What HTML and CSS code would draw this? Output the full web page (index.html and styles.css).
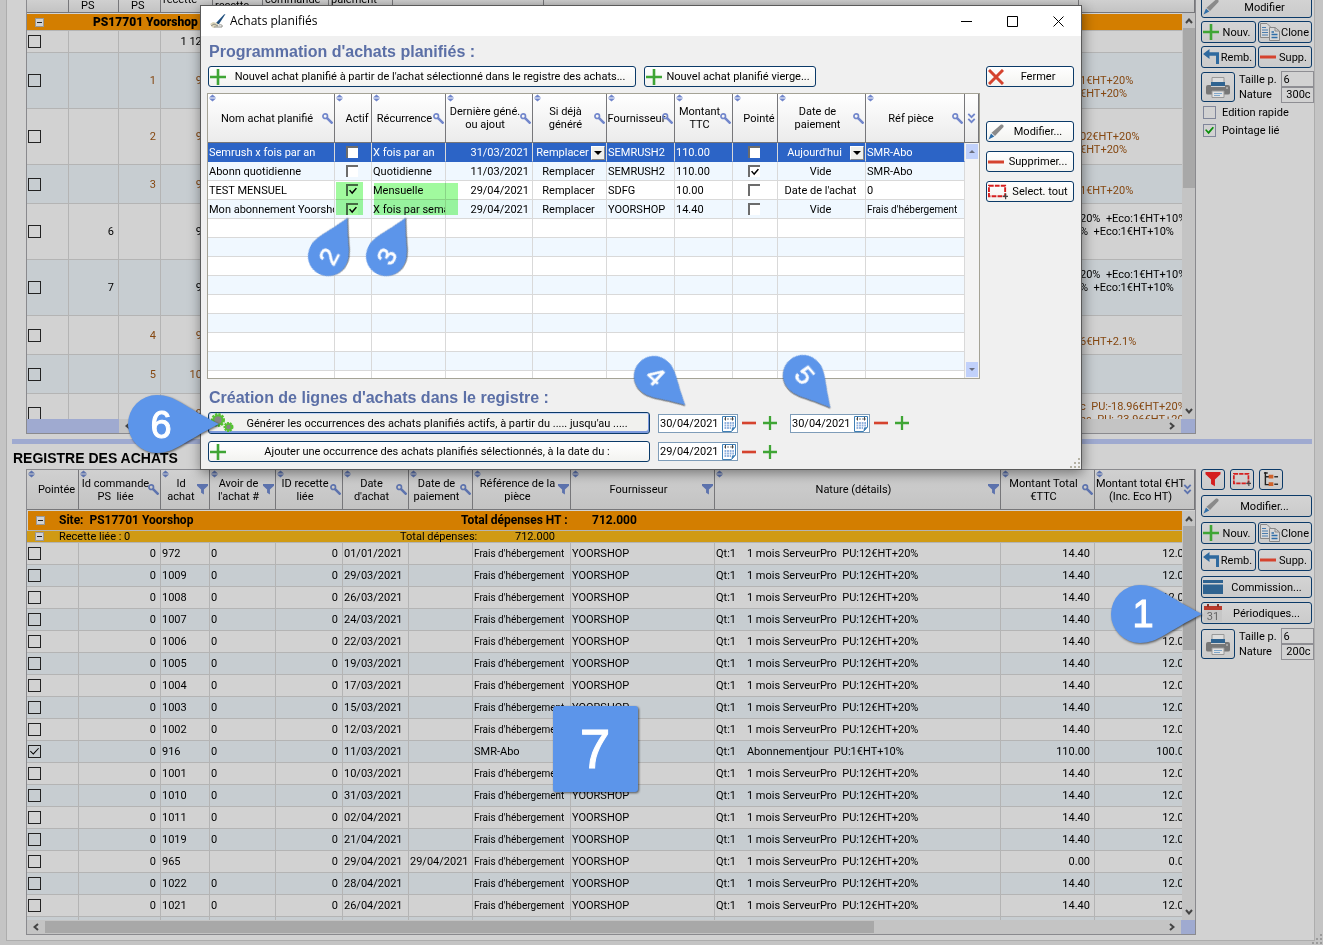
FILE: index.html
```html
<!DOCTYPE html>
<html lang="fr">
<head>
<meta charset="utf-8">
<title>Registre des achats</title>
<link rel="stylesheet" href="styles.css">
</head>
<body>
<svg class="defs" aria-hidden="true">
  <symbol id="sort" viewBox="0 0 8 8"><path d="M4 0L8 3.500H0zM4 8L0 4.500H8z"/></symbol>
  <symbol id="key" viewBox="0 0 12 12"><circle cx="3.500" cy="3.500" r="2.500" fill="none" stroke="currentColor" stroke-width="1.800"/><path d="M5 5L11.500 11.500" fill="none" stroke="currentColor" stroke-width="2.800"/></symbol>
  <symbol id="funnel" viewBox="0 0 10 10"><path d="M0 0H10V1.500L6.300 5V9.500L3.700 8V5L0 1.500z"/></symbol>
  <symbol id="more" viewBox="0 0 9 12"><path d="M1 1L4.500 4.500L8 1M1 6.500L4.500 10L8 6.500" fill="none" stroke="currentColor" stroke-width="2"/></symbol>
  <symbol id="plus" viewBox="0 0 16 16"><path d="M6.700 0H9.300V6.700H16V9.300H9.300V16H6.700V9.300H0V6.700H6.700z" fill="currentColor"/></symbol>
  <symbol id="minus" viewBox="0 0 16 16"><path d="M0 6.500H16V9.500H0z" fill="currentColor"/></symbol>
  <symbol id="cross" viewBox="0 0 16 16"><path d="M1 1L15 15M15 1L1 15" stroke="currentColor" stroke-width="3" fill="none"/></symbol>
  <symbol id="pencil" viewBox="0 0 16 16"><path d="M13 .5Q16 0 15.500 3L7 12L3.500 8.700z" fill="#8a8a8a"/><path d="M3 9.500L6.300 12.600L.5 15.500z" fill="#2f6ea8"/></symbol>
  <symbol id="clone" viewBox="0 0 20 18"><path d="M.5.5H7L10.500 4V14.500H.5z" fill="#d8d8d8" stroke="#888"/><path d="M2 4.500H6M2 7H8M2 9.500H8M2 12H8" stroke="#4a7cad"/><path d="M9.500 4.500H15L19.500 8V17.500H9.500z" fill="#d8d8d8" stroke="#888"/><path d="M15 4.500V8H19" fill="none" stroke="#888"/><path d="M11.500 9H14M11.500 11.500H17.500M11.500 14.500H17.500" stroke="#2f6ea8" stroke-width="1.400"/></symbol>
  <symbol id="back" viewBox="0 0 16 16"><path d="M0 5L6.500 0V3.300H16V15H13V6.800H6.500V10z" fill="#2f6a9f"/></symbol>
  <symbol id="printer" viewBox="0 0 24 22"><path d="M6 1.500H18V8H6z" fill="#ddd" stroke="#999"/><path d="M5 6H19V10H5z" fill="#2f6390"/><path d="M2 9H5V11H19V9H22Q24 9 24 11V17Q24 18.500 22 18.500H2Q0 18.500 0 17V11Q0 9 2 9z" fill="#777"/><path d="M6 15H18V21.500H6z" fill="#e2e2e2" stroke="#999"/><path d="M8 17.500H16M8 19.500H14" stroke="#7fa6c9"/><circle cx="21" cy="12" r=".8" fill="#ddd"/></symbol>
  <symbol id="marquee" viewBox="0 0 21 15"><path d="M1 1H18V12H1z" fill="none" stroke="#d51f1f" stroke-width="2" stroke-dasharray="5 1.200"/><path d="M18.500 9V15M15.500 12H21" stroke="#444" stroke-width="1.300"/></symbol>
  <symbol id="tree" viewBox="0 0 17 16"><path d="M2.500 0V13.500H8M2.500 5H8M1 1H5" fill="none" stroke="#222" stroke-width="1.500"/><path d="M6 3H11V7H6zM6 11H11V15H6z" fill="#d0622a"/><path d="M12 5H16M12 13H16" stroke="#333" stroke-width="1.500"/></symbol>
  <symbol id="card" viewBox="0 0 20 14"><path d="M0 0H20V3H0zM0 4.500H20V14H0z" fill="#2f6390"/></symbol>
  <symbol id="calendar" viewBox="0 0 18 18"><path d="M0 3H18V18H0z" fill="#c6c6c6"/><path d="M0 2H18V6H0z" fill="#b83a2c"/><path d="M4 0V3M14 0V3" stroke="#8c3128" stroke-width="2"/><text x="9" y="16" font-size="11" text-anchor="middle" fill="#666">31</text></symbol>
  <symbol id="datepick" viewBox="0 0 14 17"><path d="M.5 1.500H13.500V12L9.500 16.500H.5z" fill="#fff" stroke="#3f7fb5"/><path d="M2 4H12" stroke="#777" stroke-dasharray="2 1"/><path d="M3.500 2V5.500M10.500 2V5.500" stroke="#444"/><path d="M2.500 8H12M2.500 10.500H12M2.500 13H9" stroke="#8fb0dd" stroke-width="1.800" stroke-dasharray="1.800 .8"/><path d="M9.500 16.500L10 12.500L13.500 12z" fill="#3f7fb5"/></symbol>
  <symbol id="gears" viewBox="0 0 24 20"><circle cx="8" cy="7" r="5.500" fill="#858585" stroke="#55c331" stroke-width="3" stroke-dasharray="2.200 1"/><circle cx="8" cy="7" r="4.500" fill="none" stroke="#55c331" stroke-width="1.600"/><circle cx="18.500" cy="14" r="3.700" fill="#858585" stroke="#55c331" stroke-width="2.600" stroke-dasharray="1.800 .8"/><circle cx="18.500" cy="14" r="3" fill="none" stroke="#55c331" stroke-width="1.400"/></symbol>
  <symbol id="quill" viewBox="0 0 16 16"><path d="M15.500 1L14 1.500L6 10L7 11.500L9 11z" fill="#1d4d7c"/><path d="M0 11L3 9L7 10L9 13L3 15z" fill="#ddd6ba"/><path d="M1 13L4 11L8 13M9 12Q13 11 12 14H4" fill="none" stroke="#8d8d86"/></symbol>
  <symbol id="up" viewBox="0 0 8 6"><path d="M1 5L4 1.500L7 5" fill="none" stroke="#444" stroke-width="2"/></symbol>
  <symbol id="down" viewBox="0 0 8 6"><path d="M1 1L4 4.500L7 1" fill="none" stroke="#444" stroke-width="2"/></symbol>
  <symbol id="left" viewBox="0 0 6 8"><path d="M5 1L1.500 4L5 7" fill="none" stroke="#444" stroke-width="2"/></symbol>
  <symbol id="right" viewBox="0 0 6 8"><path d="M1 1L4.500 4L1 7" fill="none" stroke="#444" stroke-width="2"/></symbol>
  <symbol id="caret" viewBox="0 0 8 4"><path d="M0 0H8L4 4z"/></symbol>
</svg>

<main class="app">
  <section class="pane pane-top">
    <div class="grid-frame">
      <div class="viewport">
        <table class="grid grid-sales" id="sales"></table>
      </div>
      <div class="vbar vbar-sales"><svg><use href="#up"/></svg><i></i><svg><use href="#down"/></svg></div>
      <div class="hbar hbar-sales"><b></b><svg><use href="#left"/></svg><i></i><svg><use href="#right"/></svg><b class="corner"></b></div>
    </div>
    <aside class="tools">
      <button class="btn"><svg class="i16"><use href="#pencil"/></svg><span>Modifier</span></button>
      <div class="pair">
        <button class="btn"><svg class="i16 green"><use href="#plus"/></svg><span>Nouv.</span></button>
        <button class="btn"><svg class="i20"><use href="#clone"/></svg><span>Clone</span></button>
        <button class="btn"><svg class="i16"><use href="#back"/></svg><span>Remb.</span></button>
        <button class="btn"><svg class="i16 red"><use href="#minus"/></svg><span>Supp.</span></button>
      </div>
      <div class="print">
        <button class="btn btn-print" aria-label="Imprimer"><svg><use href="#printer"/></svg></button>
        <label for="t1">Taille p.</label><input id="t1" value="6">
        <label for="n1">Nature</label><input id="n1" class="num" value="300c">
      </div>
      <label class="tick"><input type="checkbox">Edition rapide</label>
      <label class="tick"><input type="checkbox" checked>Pointage lié</label>
    </aside>
  </section>

  <div class="splitter"></div>
  <h1 class="title">REGISTRE DES ACHATS</h1>

  <section class="pane pane-bottom">
    <div class="grid-frame">
      <div class="viewport">
        <table class="grid grid-buys" id="buys"></table>
      </div>
      <div class="vbar vbar-buys"><svg><use href="#up"/></svg><i></i><svg><use href="#down"/></svg></div>
      <div class="hbar hbar-buys"><svg><use href="#left"/></svg><i></i><svg><use href="#right"/></svg><b class="corner"></b></div>
    </div>
    <aside class="tools tools-buys">
      <div class="icons">
        <button class="btn" aria-label="Filtrer"><svg class="i16 pure-red"><use href="#funnel"/></svg></button>
        <button class="btn" aria-label="Sélectionner tout"><svg class="i20"><use href="#marquee"/></svg></button>
        <button class="btn" aria-label="Arborescence"><svg class="i16"><use href="#tree"/></svg></button>
      </div>
      <button class="btn"><svg class="i16"><use href="#pencil"/></svg><span>Modifier...</span></button>
      <div class="pair">
        <button class="btn"><svg class="i16 green"><use href="#plus"/></svg><span>Nouv.</span></button>
        <button class="btn"><svg class="i20"><use href="#clone"/></svg><span>Clone</span></button>
        <button class="btn"><svg class="i16"><use href="#back"/></svg><span>Remb.</span></button>
        <button class="btn"><svg class="i16 red"><use href="#minus"/></svg><span>Supp.</span></button>
      </div>
      <button class="btn"><svg class="i20"><use href="#card"/></svg><span>Commission...</span></button>
      <button class="btn"><svg class="i20"><use href="#calendar"/></svg><span>Périodiques...</span></button>
      <div class="print">
        <button class="btn btn-print" aria-label="Imprimer"><svg><use href="#printer"/></svg></button>
        <label for="t2">Taille p.</label><input id="t2" value="6">
        <label for="n2">Nature</label><input id="n2" class="num" value="200c">
      </div>
    </aside>
  </section>
</main>

<div class="window" role="dialog" aria-labelledby="wt">
  <header class="titlebar">
    <svg class="i16"><use href="#quill"/></svg>
    <span id="wt" class="wtitle">Achats planifiés</span>
    <button aria-label="Réduire"><svg viewBox="0 0 11 11"><path d="M0 5.500H11"/></svg></button>
    <button aria-label="Agrandir"><svg viewBox="0 0 11 11"><path d="M.5.5H10.500V10.500H.5z"/></svg></button>
    <button aria-label="Fermer"><svg viewBox="0 0 11 11"><path d="M.5.5L10.500 10.500M10.500.5L.5 10.500"/></svg></button>
  </header>
  <div class="wbody">
    <h2>Programmation d'achats planifiés :</h2>
    <div class="planner">
      <div class="plan-main">
        <div class="row">
          <button class="btn btn-wide"><svg class="i16 green"><use href="#plus"/></svg><span>Nouvel achat planifié à partir de l'achat sélectionné dans le registre des achats...</span></button>
          <button class="btn btn-blank"><svg class="i16 green"><use href="#plus"/></svg><span>Nouvel achat planifié vierge...</span></button>
        </div>
        <div class="plan-frame">
          <div class="viewport"><table class="grid grid-plan" id="plan"></table></div>
          <div class="vbar vbar-plan"><svg><use href="#caret"/></svg><i></i><svg><use href="#caret"/></svg></div>
          <div class="mark mark-a"></div>
          <div class="mark mark-b"></div>
        </div>
      </div>
      <div class="plan-side">
        <button class="btn btn-close"><svg class="i16 red"><use href="#cross"/></svg><span>Fermer</span></button>
        <button class="btn"><svg class="i16"><use href="#pencil"/></svg><span>Modifier...</span></button>
        <button class="btn"><svg class="i16 red"><use href="#minus"/></svg><span>Supprimer...</span></button>
        <button class="btn"><svg class="i20"><use href="#marquee"/></svg><span>Select. tout</span></button>
      </div>
    </div>
    <h2>Création de lignes d'achats dans le registre :</h2>
    <div class="row create">
      <button class="btn btn-create focus"><svg class="i24"><use href="#gears"/></svg><span>Générer les occurrences des achats planifiés actifs, à partir du ..... jusqu'au .....</span></button>
      <div class="date"><input aria-label="Date de début" value="30/04/2021"><button aria-label="Calendrier"><svg><use href="#datepick"/></svg></button></div>
      <button class="step red" aria-label="Jour précédent"><svg><use href="#minus"/></svg></button>
      <button class="step green" aria-label="Jour suivant"><svg><use href="#plus"/></svg></button>
      <div class="date date-end"><input aria-label="Date de fin" value="30/04/2021"><button aria-label="Calendrier"><svg><use href="#datepick"/></svg></button></div>
      <button class="step red" aria-label="Jour précédent"><svg><use href="#minus"/></svg></button>
      <button class="step green" aria-label="Jour suivant"><svg><use href="#plus"/></svg></button>
    </div>
    <div class="row create">
      <button class="btn btn-create"><svg class="i16 green"><use href="#plus"/></svg><span>Ajouter une occurrence des achats planifiés sélectionnés, à la date du :</span></button>
      <div class="date"><input aria-label="Date de l'occurrence" value="29/04/2021"><button aria-label="Calendrier"><svg><use href="#datepick"/></svg></button></div>
      <button class="step red" aria-label="Jour précédent"><svg><use href="#minus"/></svg></button>
      <button class="step green" aria-label="Jour suivant"><svg><use href="#plus"/></svg></button>
    </div>
  </div>
  <svg class="grip" viewBox="0 0 10 10"><path d="M8 0h2v2h-2zM4 4h2v2h-2zM8 4h2v2h-2zM0 8h2v2h-2zM4 8h2v2h-2zM8 8h2v2h-2z"/></svg>
</div>

<svg class="callouts" aria-label="Repères">
  <defs><path id="drop" d="M0 -29A29 29 0 0 0 0 29C18 29 26 18 62 0C26 -18 18 -29 0 -29z"/></defs>
  <g transform="translate(1140 614)"><use href="#drop"/><text x="3" y="13">1</text></g>
  <g transform="translate(157 424)"><use href="#drop"/><text x="4" y="14">6</text></g>
  <g transform="translate(328 256) rotate(-63) scale(.69)"><use href="#drop"/><text x="0" y="15">2</text></g>
  <g transform="translate(386 256) rotate(-63) scale(.69)"><use href="#drop"/><text x="0" y="15">3</text></g>
  <g transform="translate(654 376) rotate(43) scale(.69)"><use href="#drop"/><text x="2" y="12">4</text></g>
  <g transform="translate(803 375) rotate(50) scale(.69)"><use href="#drop"/><text x="2" y="12">5</text></g>
  <g transform="translate(595 749)"><rect x="-42" y="-43" width="85" height="86" rx="3"/><text class="big" x="0" y="19">7</text></g>
</svg>
<svg class="grip grip-page" viewBox="0 0 10 10"><path d="M8 0h2v2h-2zM4 4h2v2h-2zM8 4h2v2h-2zM0 8h2v2h-2zM4 8h2v2h-2zM8 8h2v2h-2z"/></svg>
<script src="app.js"></script>
</body>
</html>
```

FILE: styles.css
```css
* { box-sizing: border-box; }
body {
  margin: 0;
  height: 100vh;
  padding: 0 8px 4px 6px;
  overflow: hidden;
  position: relative;
  background: #c4c4c4;
  color: #000;
  font: 11px/13px Roboto, "Liberation Sans", sans-serif;
}
.defs { position: absolute; width: 0; height: 0; }
button, input, select { font: inherit; color: inherit; }
svg { flex: none; }

.i16 { width: 16px; height: 16px; }
.i20 { width: 20px; height: 18px; }
.i24 { width: 24px; height: 20px; }
.green { color: #3fa535; }
.red { color: #d5432e; }
.pure-red { fill: #d51f1f; }

/* page frame */
.app {
  height: 100%;
  display: flex;
  flex-direction: column;
  background: #d2d2d2;
  border: solid #adadad;
  border-width: 0 1px 1px;
}
.pane { display: flex; padding: 0 2px 0 19px; gap: 5px; }
.pane-top { height: 434px; }
.pane-bottom { flex: 1; min-height: 0; padding-bottom: 5px; }
.grid-frame {
  flex: 1;
  min-width: 0;
  display: flex;
  flex-direction: column;
  position: relative;
  border: 1px solid #8a8a8e;
}
.pane-top .grid-frame { border-top: 0; }
.viewport { flex: 1; min-height: 0; overflow: hidden; }
.splitter { height: 5px; margin: 5px 2px 0 5px; background: #9faad0; }
.title {
  margin: 0;
  padding: 5px 0 2px 6px;
  font: 700 14px/18px "Liberation Sans", sans-serif;
}

/* data grids */
.grid { width: 100%; table-layout: fixed; border-collapse: separate; border-spacing: 0; }
.grid th {
  position: relative;
  padding: 0;
  font-weight: 400;
  border: solid #77777a;
  border-width: 0 1px 1px 0;
  background: linear-gradient(#d0d0d0, #c3c3c3);
}
.grid td {
  padding: 0 4px 0 1px;
  overflow: hidden;
  white-space: nowrap;
  border: solid #b4b4b4;
  border-width: 0 1px 1px 0;
}
.grid .r { text-align: right; }
.grid .c { text-align: center; }
.grid .name { padding-right: 0; }
.grid .long { padding-right: 0; font-size: 10px; }
.head { display: flex; align-items: center; justify-content: flex-end; }
.head span { flex: 1; text-align: center; white-space: pre; }
.head.plain span { padding-left: 8px; }
.head svg { width: 11px; height: 11px; margin: 0 1px 0 -4px; color: #5d73ae; fill: #5d73ae; }
.head .sort { position: absolute; left: 1px; top: 0; width: 7px; height: 8px; margin: 0; }
.grid input[type=checkbox], .tick input {
  appearance: none;
  display: block;
  position: relative;
  flex: none;
  width: 13px;
  height: 13px;
  margin: 0;
  border: 1px solid #222;
}
.grid input:checked::before, .tick input:checked::before {
  content: "";
  position: absolute;
  inset: 1px;
  background: currentColor;
  clip-path: polygon(0 45%, 15% 35%, 38% 62%, 85% 8%, 100% 20%, 40% 92%);
}
.grid-buys input:checked::before { clip-path: polygon(0 50%, 8% 42%, 36% 70%, 92% 10%, 100% 18%, 37% 86%); }
.grid .even td { background: #c7cdd1; }
.group td { background: #d37e00; border-right: 0; }
.group div { display: flex; align-items: center; overflow: hidden; font-weight: 700; font-size: 12px; }
.group button {
  width: 9px;
  height: 9px;
  margin: 0 0 0 7px;
  padding: 0;
  border: 1px solid #999;
  background: linear-gradient(#222, #222) center / 5px 1px no-repeat #d2d2d2;
}

.grid-sales th { height: 13px; }
.grid-sales th div { height: 12px; display: flex; align-items: flex-end; overflow: hidden; padding-left: 2px; }
.grid-sales .short div { padding-left: 12px; }
.grid-sales .mid div { padding-bottom: 6px; }
.grid-sales .low div { padding-bottom: 0; }
.grid-sales td { white-space: pre; }
.grid-sales .group td { height: 18px; border-top: 1px solid #d2d2d2; }
.grid-sales .group div { height: 16px; padding-left: 0; }
.grid-sales .group b { margin-left: 49px; }
.brown { color: #854710; }

.grid-buys th { height: 40px; }
.grid-buys td { height: 22px; }
.grid-buys .group td { height: 21px; border-left: 1px solid #d2d2d2; border-top: 1px solid #d2d2d2; }
.grid-buys .group div { height: 19px; white-space: pre; }
.group .g-name { width: 402px; margin-left: 14px; }
.group .g-label { width: 131px; }
.grid-buys .subgroup td { height: 12px; background: #d09a14; border-left: 0; border-top: 0; }
.grid-buys .subgroup div { height: 11px; font-weight: 400; font-size: 11px; }
.subgroup .g-name { width: 341px; margin-left: 15px; }
.subgroup .g-label { width: 115px; }

/* scroll bars */
.vbar {
  position: absolute;
  right: 0;
  width: 13px;
  display: flex;
  flex-direction: column;
  align-items: center;
  background: #c4c4c4;
  padding: 5px 0;
}
.vbar svg { width: 8px; height: 6px; }
.vbar svg:last-child { margin-top: auto; }
.vbar i { width: 12px; margin-top: 4px; background: #a8a8a8; }
.vbar-sales { top: 13px; bottom: 14px; }
.vbar-sales i { height: 160px; }
.vbar-buys { top: 41px; bottom: 14px; }
.vbar-buys i { height: 124px; }
.hbar { height: 14px; display: flex; align-items: center; background: #c4c4c4; }
.hbar svg { width: 6px; height: 8px; margin: 0 6px; }
.hbar b { width: 92px; height: 14px; background: #9faad0; }
.hbar .corner { width: 14px; }
.hbar i { height: 12px; margin-right: auto; background: #a8a8a8; }
.hbar-buys i { width: 71%; }

/* buttons */
.btn {
  display: flex;
  align-items: center;
  min-width: 0;
  height: 22px;
  padding: 0 1px;
  border: 1px solid #0b3a68;
  border-radius: 3px;
  background: linear-gradient(#d4d4d4, #cbcbcb);
  white-space: nowrap;
}
.btn span { flex: 1; text-align: center; }

/* right-hand tools */
.tools { width: 111px; margin-top: -4px; display: flex; flex-direction: column; gap: 3px; }
.pair { display: grid; grid-template-columns: 55px 54px; gap: 3px 2px; }
.tools-buys { width: 111px; margin-top: 0; gap: 5px; }
.tools-buys .pair { row-gap: 5px; }
.tools-buys > :nth-last-child(-n+2) { margin-top: -1px; }
.icons { display: flex; gap: 5px; }
.icons .btn { width: 24px; height: 21px; justify-content: center; padding: 0; }
.icons svg { width: 18px; height: 15px; }
.print { display: grid; grid-template-columns: 34px 1fr 33px; grid-template-rows: 16px 15px; align-items: center; column-gap: 4px; }
.print .btn-print { grid-row: span 2; height: 30px; justify-content: center; }
.btn-print svg { width: 24px; height: 22px; }
.print label { white-space: nowrap; }
.print input { width: 33px; height: 16px; padding: 0 2px; border: 1px solid #8e8e93; background: none; }
.print .num { text-align: right; }
.tick { display: flex; align-items: center; gap: 6px; margin: 1px 2px; }
.tick input { border-color: #80869a; color: #0a8f0a; }

/* scheduled purchases window */
.window {
  position: absolute;
  left: 200px;
  right: 241px;
  top: 5px;
  border: 1px solid #5a5a5a;
  background: #f0f0f0;
  box-shadow: 1px 3px 12px rgba(0, 0, 0, .45);
}
.titlebar { display: flex; align-items: center; height: 30px; padding-left: 9px; background: #fff; }
.wtitle { flex: 1; margin-left: 4px; font: 12px/16px "Open Sans", sans-serif; }
.titlebar button { width: 46px; height: 30px; padding: 0; border: 0; background: none; display: grid; place-items: center; }
.titlebar button svg { width: 11px; height: 11px; fill: none; stroke: #000; }
.wbody { padding: 6px 7px 7px; }
.window h2 { margin: 0; padding: 0 1px; font: 700 16px/20px "Liberation Sans", sans-serif; color: #5b6fa6; }
.window .btn { background: linear-gradient(#fff, #f3f3f0); height: 21px; }
.row { display: flex; }
.planner { display: flex; gap: 5px; padding: 4px 0 9px; }
.plan-main { flex: 1; min-width: 0; }
.btn-wide { width: 428px; }
.btn-blank { width: 172px; margin-left: 8px; }
.plan-side { width: 88px; display: flex; flex-direction: column; gap: 9px; }
.plan-side .btn-close { margin-bottom: 25px; }
.plan-frame { position: relative; height: 286px; margin: 6px 1px 0 -1px; border: 1px solid #a5a396; display: flex; }
.grid-plan th { height: 49px; background: linear-gradient(#fff, #ebebeb); }
.grid-plan td { height: 19px; padding: 2px 3px 0 1px; border-color: #d9d9d9; background: #fff; line-height: 16px; }
.grid-plan .even td { background: #f0f8ff; }
.grid-plan .sel td { background: #2c64c6; color: #fff; border-bottom-color: #2c64c6; }
.grid-plan .head svg { color: #7186cb; fill: #7186cb; }
.grid-plan input[type=checkbox] {
  margin: -2px auto 0;
  width: 12px;
  height: 12px;
  border: solid #6c6c6c;
  border-width: 2px 0 0 2px;
  background: #fff;
  color: #000;
}
.pick { display: flex; align-items: center; margin: -1px -2px 0 0; }
.pick select { flex: 1; min-width: 0; height: 16px; padding: 0; border: 0; appearance: none; background: none; text-align: center; text-align-last: center; }
.pick svg { width: 14px; height: 14px; padding: 4px 2px; background: #f0f0ec; border: 1px solid #888; border-left-color: #fff; border-top-color: #fff; }
.vbar-plan { top: 49px; bottom: 0; width: 14px; padding: 1px; background: #f4f4f4; }
.vbar-plan svg { width: 12px; height: 15px; padding: 5px 3px; background: #c1d1fb; fill: #6a6f80; }
.vbar-plan svg:first-child { transform: rotate(180deg); }
.mark { position: absolute; height: 33px; background: #a1fa9e; mix-blend-mode: multiply; }
.mark-a { left: 128px; top: 88px; width: 27px; }
.mark-b { left: 166px; top: 89px; width: 84px; height: 32px; }
.create { align-items: center; margin-top: 4px; }
.create + .create { margin-top: 7px; }
.btn-create { width: 442px; }
.window .focus { height: 22px; border-width: 1px; background: #f1f1ee; box-shadow: inset -1px -2px #7d9ade, inset 1px 1px #c5d5f5; }
.focus svg { margin-right: -8px; }
.date { display: flex; align-items: center; width: 80px; height: 19px; margin-left: 8px; border: 1px solid #7f9db9; background: #fff; }
.date input { width: 63px; padding: 0 0 0 1px; border: 0; background: none; }
.date button { width: 15px; height: 17px; padding: 0; border: 0; background: none; }
.date svg { display: block; width: 14px; height: 17px; }
.date-end { margin-left: 13px; }
.step { width: 14px; height: 16px; margin-left: 4px; padding: 0; border: 0; background: none; }
.step + .step { margin-left: 7px; }
.step svg { display: block; width: 14px; height: 16px; }
.grip { position: absolute; right: 1px; bottom: 1px; width: 10px; height: 10px; fill: #b5b2a5; }
.grip-page { fill: #9a9a9a; }

/* numbered callouts */
.callouts { position: absolute; inset: 0; width: 100%; height: 100%; pointer-events: none; }
.callouts g { fill: #5c95ea; filter: drop-shadow(1px 1px 1px rgba(0, 0, 0, .6)); }
.callouts text { fill: #fff; stroke: #fff; stroke-width: 1px; font: 38px "Liberation Sans", sans-serif; text-anchor: middle; filter: none; }
.callouts .big { font-size: 55px; }
```

FILE: app.js
```js
const icon = (id, cls = "") => `<svg class="${cls}"><use href="#${id}"/></svg>`;
const tick = (label, on) => `<input type="checkbox" aria-label="${label}"${on ? " checked" : ""}>`;
const cols = list => `<colgroup>${list.map(w => `<col style="width:${w ? w + "px" : "auto"}">`).join("")}</colgroup>`;
const head = list => `<thead><tr>${list.map(([text, mark]) =>
  `<th><div class="head${mark ? "" : " plain"}">${text ? icon("sort", "sort") : ""}<span>${text}</span>${mark ? icon(mark) : ""}</div></th>`).join("")}</tr></thead>`;
const nameCell = text => `<td class="${text.length > 15 ? "long" : "name"}">${text}</td>`;

/* sales register */
const sales = [
  [22, "", "", "1 123", "", 0],
  [56, "", "1", "98", "\n1€HT+20%\n€HT+20%", 1],
  [56, "", "2", "98", "\n02€HT+20%\n€HT+20%", 1],
  [39, "", "3", "98", "\n1€HT+20%", 1],
  [56, "6", "", "98", "20%  +Eco:1€HT+10%\n%  +Eco:1€HT+10%\n ", 0],
  [56, "7", "", "98", "20%  +Eco:1€HT+10%\n%  +Eco:1€HT+10%\n ", 0],
  [39, "", "4", "98", "\n6€HT+2.1%", 1],
  [39, "", "5", "100", "", 1],
  [39, "", "", "99", "c  PU:-18.96€HT+20%\nns  PU:-23.96€HT+20%", 1]
];
document.getElementById("sales").innerHTML =
  cols([42, 50, 42, 52, 50, 66, 64, 151, 0, 116]) +
  `<thead><tr><th></th><th class="short"><div>PS</div></th><th class="short"><div>PS</div></th>
   <th class="mid"><div>recette</div></th><th class="low"><div>recette</div></th><th class="mid"><div>commande</div></th>
   <th class="mid"><div>paiement</div></th><th></th><th></th><th></th></tr></thead>
   <tbody><tr class="group"><td colspan="10"><div><button aria-label="Replier"></button><b>PS17701 Yoorshop</b></div></td></tr>` +
  sales.map(([h, a, b, c, t, brown], i) =>
    `<tr class="${i % 2 ? "even" : ""}${brown ? " brown" : ""}" style="height:${h}px"><td>${tick("Ligne " + (i + 1))}</td>
     <td class="r">${a}</td><td class="r">${b}</td><td class="r">${c}</td><td></td><td></td><td></td><td></td><td></td><td>${t}</td></tr>`).join("") +
  "</tbody>";

/* purchase register */
const host = "Qt:1    1 mois ServeurPro  PU:12€HT+20%";
const buys = [
  ["972", "01/01/2021"], ["1009", "29/03/2021"], ["1008", "26/03/2021"], ["1007", "24/03/2021"],
  ["1006", "22/03/2021"], ["1005", "19/03/2021"], ["1004", "17/03/2021"], ["1003", "15/03/2021"],
  ["1002", "12/03/2021"],
  ["916", "11/03/2021", { on: 1, ref: "SMR-Abo", text: "Qt:1    Abonnementjour  PU:1€HT+10%", ttc: "110.00", ht: "100.00" }],
  ["1001", "10/03/2021"], ["1010", "31/03/2021"], ["1011", "02/04/2021"], ["1019", "21/04/2021"],
  ["965", "29/04/2021", { credit: "", paid: "29/04/2021", ttc: "0.00", ht: "0.00" }],
  ["1022", "28/04/2021"], ["1021", "26/04/2021"], ["1020", "23/04/2021"]
];
document.getElementById("buys").innerHTML =
  cols([52, 82, 49, 66, 67, 66, 64, 98, 144, 0, 94, 100]) +
  head([["Pointée", ""], ["Id commande\nPS  liée", "key"], ["Id\nachat", "funnel"], ["Avoir de\nl'achat #", "funnel"],
    ["ID recette\nliée", "key"], ["Date\nd'achat", "key"], ["Date de\npaiement", "key"], ["Référence de la\npièce", "funnel"],
    ["Fournisseur", "funnel"], ["Nature (détails)", "funnel"], ["Montant Total\n€TTC", "key"], ["Montant total €HT\n(Inc. Eco HT)", "more"]]) +
  `<tbody><tr class="group"><td colspan="12"><div><button aria-label="Replier"></button><span class="g-name">Site:  PS17701 Yoorshop</span><span class="g-label">Total dépenses HT :</span><span>712.000</span></div></td></tr>
   <tr class="group subgroup"><td colspan="12"><div><button aria-label="Replier"></button><span class="g-name">Recette liée : 0</span><span class="g-label">Total dépenses:</span><span>712.000</span></div></td></tr>` +
  buys.map(([id, date, o = {}], i) => `<tr class="${i % 2 ? "even" : ""}">
    <td>${tick("Achat " + id, o.on)}</td><td class="r">0</td><td>${id}</td><td>${o.credit ?? "0"}</td><td class="r">0</td>
    <td>${date}</td><td>${o.paid || ""}</td>${nameCell(o.ref || "Frais d'hébergement")}<td>YOORSHOP</td>
    <td style="white-space:pre">${o.text || host}</td><td class="r">${o.ttc || "14.40"}</td><td class="r">${o.ht || "12.00"}</td></tr>`).join("") +
  "</tbody>";

/* scheduled purchases */
const pick = text => `<div class="pick"><select aria-label="${text}"><option>${text}</option></select>${icon("caret")}</div>`;
const plan = [
  ["Semrush x fois par an", 0, "X fois par an", "31/03/2021", pick("Remplacer"), "SEMRUSH2", "110.00", 0, pick("Aujourd'hui"), "SMR-Abo"],
  ["Abonn quotidienne", 0, "Quotidienne", "11/03/2021", "Remplacer", "SEMRUSH2", "110.00", 1, "Vide", "SMR-Abo"],
  ["TEST MENSUEL", 1, "Mensuelle", "29/04/2021", "Remplacer", "SDFG", "10.00", 0, "Date de l'achat", "0"],
  ["Mon abonnement Yoorshop", 1, "X fois par semaine", "29/04/2021", "Remplacer", "YOORSHOP", "14.40", 0, "Vide", "Frais d'hébergement"]
];
while (plan.length < 13) plan.push(null);
document.getElementById("plan").innerHTML =
  cols([0, 37, 74, 87, 74, 68, 58, 45, 88, 99, 14]) +
  head([["Nom achat planifié", "key"], ["Actif", ""], ["Récurrence", "key"], ["Dernière géné.\nou ajout", "key"], ["Si déjà\ngénéré", "key"],
    ["Fournisseur", "key"], ["Montant\nTTC", "key"], ["Pointé", ""], ["Date de\npaiement", "key"], ["Réf pièce", "key"], ["", "more"]]) +
  "<tbody>" + plan.map((r, i) => `<tr class="${i === 0 ? "sel" : i % 2 ? "even" : ""}">` +
    (r ? `<td>${r[0]}</td><td>${tick("Actif", r[1])}</td><td>${r[2]}</td><td class="r">${r[3]}</td><td class="c">${r[4]}</td>
      <td>${r[5]}</td><td>${r[6]}</td><td>${tick("Pointé", r[7])}</td><td class="c">${r[8]}</td>${nameCell(r[9])}<td></td>`
      : "<td></td>".repeat(11)) + "</tr>").join("") + "</tbody>";
```
